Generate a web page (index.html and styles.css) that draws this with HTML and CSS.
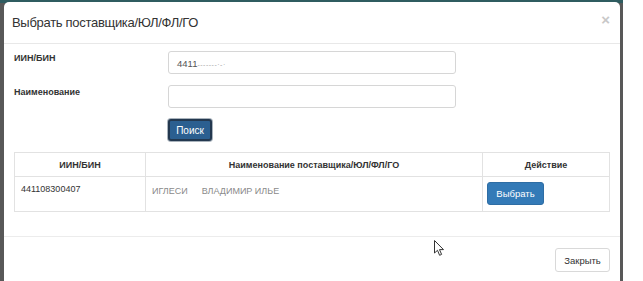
FILE: index.html
```html
<!DOCTYPE html>
<html lang="ru">
<head>
  <meta charset="UTF-8" />
  <title>Выбрать поставщика</title>
  <link rel="stylesheet" href="styles.css">
</head>
<body>

<div class="backdrop">
  <div class="modal">
    <div class="modal-header">
      <h4 class="modal-title">Выбрать поставщика/ЮЛ/ФЛ/ГО</h4>
      <span class="close">&times;</span>
    </div>

    <div class="modal-body">
      <form class="search-form">
        <label for="iin">ИИН/БИН</label>
        <div class="fake-input" id="iin">4411<span class="smudge">-------·-·</span></div>

        <label for="name">Наименование</label>
        <div class="fake-input" id="name"></div>

        <span></span>
        <div><button type="button" class="btn-search">Поиск</button></div>
      </form>

      <table class="results">
        <thead>
          <tr>
            <th class="col-iin">ИИН/БИН</th>
            <th class="col-name">Наименование поставщика/ЮЛ/ФЛ/ГО</th>
            <th class="col-action">Действие</th>
          </tr>
        </thead>
        <tbody>
          <tr>
            <td class="cell-iin">441108300407</td>
            <td class="cell-name"><span class="blurred">ИГЛЕСИ</span><span class="gap"></span><span class="blurred">ВЛАДИМИР ИЛЬЕ</span></td>
            <td class="cell-action"><button type="button" class="btn-pick">Выбрать</button></td>
          </tr>
        </tbody>
      </table>
    </div>

    <div class="modal-footer">
      <button type="button" class="btn-close">Закрыть</button>
    </div>

    <svg class="cursor" width="11" height="17" viewBox="0 0 11 17">
      <path d="M0.5 0.5 L0.5 13 L3.5 10.3 L5.6 15.3 L7.6 14.4 L5.5 9.6 L9.5 9.6 Z" fill="#fff" stroke="#333" stroke-width="1"/>
    </svg>
  </div>
</div>

</body>
</html>
```

FILE: styles.css
```css
body {
  margin: 0;
  background: #fff;
  font-family: "Liberation Sans", Arial, sans-serif;
  color: #333;
}

.backdrop {
  width: 623px;
  height: 281px;
  box-sizing: border-box;
  padding: 2px 3px 0 4px;
  background: linear-gradient(to bottom, #2f5c60 0, #2f5c60 3px, #585858 3px);
  overflow: hidden;
}

.modal {
  position: relative;
  width: 616px;
  height: 279px;
  background: #fff;
  border-radius: 5px 5px 0 0;
}

.modal-header {
  height: 41px;
  padding: 0 10px 0 8px;
  border-bottom: 1px solid #e8e8e8;
  display: flex;
  align-items: center;
  justify-content: space-between;
}

.modal-title {
  margin: 0;
  font-size: 13px;
  font-weight: normal;
  color: #333;
  letter-spacing: -0.3px;
}

.close {
  font-size: 15px;
  font-weight: bold;
  color: #c8c8c8;
  margin-top: -6px;
}

.modal-body {
  padding: 7px 10px 0 10px;
}

.search-form {
  display: grid;
  grid-template-columns: 154px 288px;
  row-gap: 11px;
  margin-bottom: 11px;
}

label {
  font-size: 9px;
  font-weight: bold;
  padding-top: 2px;
}

.fake-input {
  height: 23px;
  box-sizing: border-box;
  border: 1px solid #d6d6d6;
  border-radius: 3px;
  font-size: 9.5px;
  color: #555;
  padding: 6px 8px;
}

.smudge {
  color: #a8a8a8;
  font-size: 7px;
  letter-spacing: 0.5px;
}

button {
  font-family: "Liberation Sans", Arial, sans-serif;
  cursor: pointer;
}

.btn-search {
  width: 44px;
  height: 22px;
  padding: 0;
  font-size: 10px;
  color: #fff;
  background: #2b5f90;
  border: 2px solid #23384f;
  border-radius: 3px;
  box-shadow: 0 0 0 1px #a9b3bc;
}

.results {
  width: 596px;
  border-collapse: collapse;
  font-size: 9px;
}

.results th,
.results td {
  border: 1px solid #e2e2e2;
}

.results th {
  height: 23px;
  padding: 0;
  font-weight: bold;
  text-align: center;
}

.col-iin {
  width: 130px;
}

.col-action {
  width: 126px;
}

.results tbody tr {
  height: 35px;
}

.results td {
  padding: 0 6px;
  vertical-align: top;
}

.cell-iin {
  padding-top: 7px !important;
}

.cell-name {
  padding-top: 9px !important;
}

.cell-action {
  padding: 5px 4px 0 !important;
}

.blurred {
  color: #8a8a8a;
  font-size: 9px;
}

.gap {
  display: inline-block;
  width: 14px;
}

.btn-pick {
  width: 57px;
  height: 23px;
  padding: 0;
  font-size: 9.5px;
  color: #fff;
  background: #337ab7;
  border: 1px solid #2e6da4;
  border-radius: 3px;
}

.modal-footer {
  margin-top: 24px;
  border-top: 1px solid #ececec;
  padding: 11px 10px 0;
  display: flex;
  justify-content: flex-end;
}

.btn-close {
  width: 55px;
  height: 24px;
  padding: 0;
  font-size: 9.5px;
  color: #333;
  background: #fff;
  border: 1px solid #d9d9d9;
  border-radius: 3px;
}

.cursor {
  position: absolute;
  left: 430px;
  top: 238px;
}
```
